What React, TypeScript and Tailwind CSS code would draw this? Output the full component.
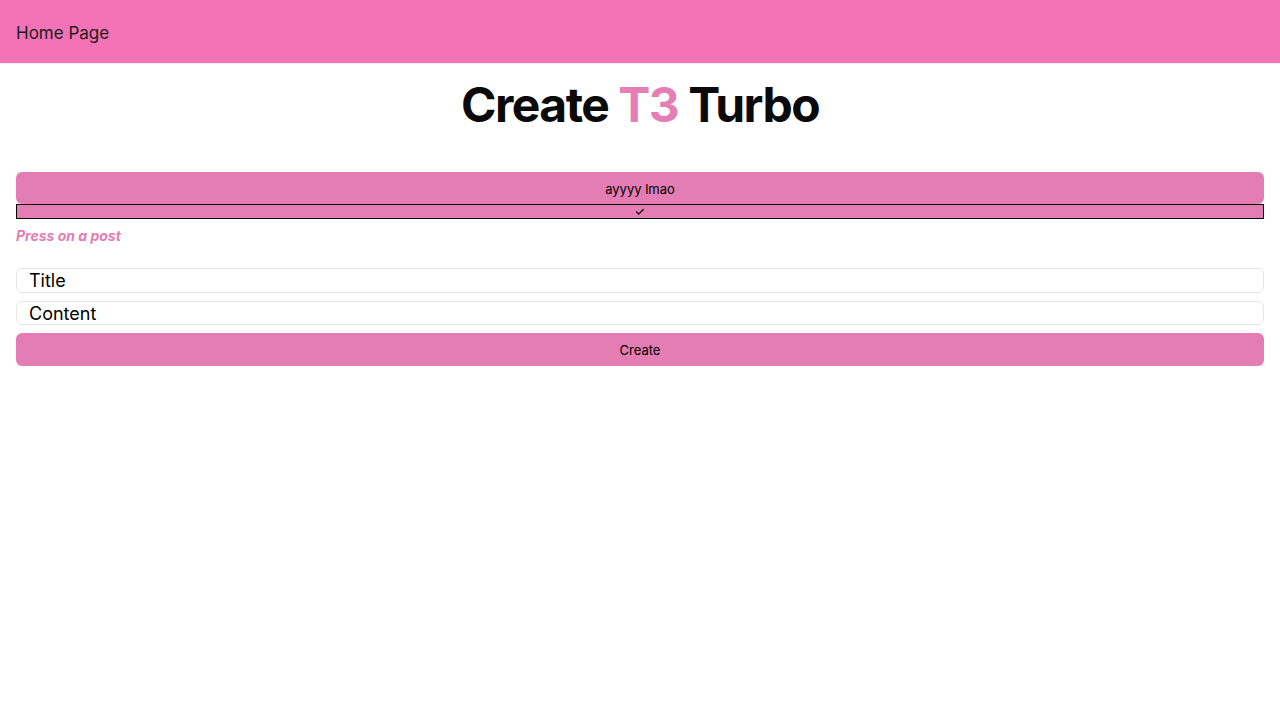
import { Check } from "lucide-react";

export default function App() {
  return (
    <div className="min-h-screen bg-white font-['Inter',sans-serif] text-black">
      <header className="flex h-[64px] items-center border-b border-[#ececec] bg-[#f472b6] px-4 pt-[5px]">
        <span className="text-[17px] text-[#1c1c1e]">Home Page</span>
      </header>

      <main className="px-4 pt-[17px]">
        <h1 className="text-center text-5xl leading-none font-bold tracking-[-1.5px] text-[#0a0a0a]">
          Create <span className="text-[#e37fb5]">T3</span> Turbo
        </h1>

        <button className="mt-[43px] flex h-8 w-full items-center justify-center rounded-md bg-[#e37db3] pt-[3px] text-[13px]">
          ayyyy lmao
        </button>
        <div className="flex h-[15px] w-full items-center justify-center border border-black bg-[#e37db3]">
          <Check size={10} strokeWidth={3} />
        </div>

        <p className="mt-[7px] text-sm leading-5 font-bold text-[#e37db3] italic">Press on a post</p>

        <div className="mt-[22px] flex flex-col gap-2">
          <div className="flex h-[25px] items-center rounded-md border border-[#e5e5e5] px-3 text-[18px]">Title</div>
          <div className="flex h-[24px] items-center rounded-md border border-[#e5e5e5] px-3 text-[18px]">Content</div>
          <button className="flex h-[33px] w-full items-center justify-center rounded-md bg-[#e37db3] pt-[2px] text-[13px]">
            Create
          </button>
        </div>
      </main>
    </div>
  );
}
